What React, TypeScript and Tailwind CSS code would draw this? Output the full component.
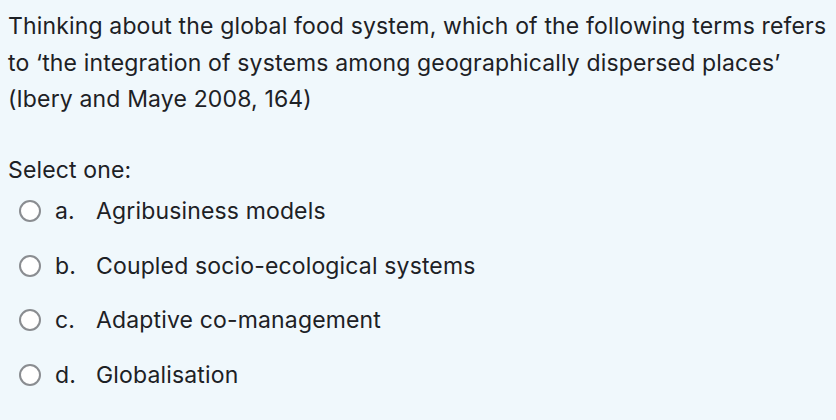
import React from 'react'

const options = [
    { letter: 'a.', label: 'Agribusiness models' },
    { letter: 'b.', label: 'Coupled socio-ecological systems' },
    { letter: 'c.', label: 'Adaptive co-management' },
    { letter: 'd.', label: 'Globalisation' },
]

export default function App() {
    return (
        <div
            className="w-[836px] h-[420px] bg-[#f0f8fc] text-[#1d2125] overflow-hidden tracking-[0.15px]"
            style={{ fontFamily: 'Inter, "Noto Sans", sans-serif' }}
        >
            <div className="pl-[8px] pt-[8px] max-w-[830px] text-[23px] leading-[36.5px]">
                Thinking about the global food system, which of the following terms refers to ‘the integration of
                systems among geographically dispersed places’ (Ibery and Maye 2008, 164)
            </div>

            <div className="pl-[8px] mt-[34px] text-[23px] leading-[36.5px]">Select one:</div>

            <div className="flex flex-col mt-[-4px]">
                {options.map((o) => (
                    <label key={o.letter} className="flex items-center h-[54.5px] text-[23px]">
                        <span className="ml-[19px] w-[22px] h-[22px] rounded-full border-2 border-[#8a8d91] bg-white shrink-0" />
                        <span className="ml-[14px] w-[41px]">{o.letter}</span>
                        <span>{o.label}</span>
                    </label>
                ))}
            </div>
        </div>
    )
}
